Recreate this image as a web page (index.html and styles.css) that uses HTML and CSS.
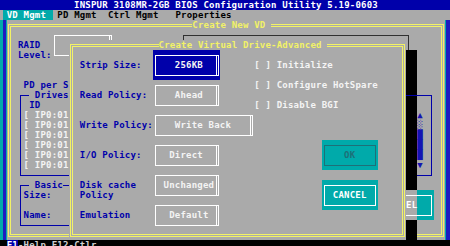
FILE: index.html
```html
<!DOCTYPE html>
<html lang="en">

<head>
    <meta charset="UTF-8">
    <title>Create Virtual Drive-Advanced</title>
    <link rel="stylesheet" href="styles.css">
</head>

<body>
    <div class="screen">
        <div class="titlebar">INSPUR 3108MR-2GB BIOS Configuration Utility 5.19-0603</div>

        <div class="menu-sel"></div>
        <div class="menu menu-vd">VD Mgmt</div>
        <div class="menu menu-pd">PD Mgmt</div>
        <div class="menu menu-ctrl">Ctrl Mgmt</div>
        <div class="menu menu-prop">Properties</div>

        <div class="edge edge-l"></div>
        <div class="edge edge-r"></div>

        <!-- Create New VD -->
        <div class="win win-new"></div>
        <div class="frame frame-new"></div>
        <div class="win-title title-new">Create New VD</div>

        <div class="t raid-lbl">RAID
Level:</div>
        <div class="box dd-raid"></div>
        <div class="thin-box"></div>
        <div class="t pd-span">PD per S</div>

        <div class="group drives-box"></div>
        <div class="t group-title drives-title"> Drives</div>
        <div class="t drives-id">ID</div>
        <div class="t drives-list">[ IP0:01
[ IP0:01
[ IP0:01
[ IP0:01
[ IP0:01
[ IP0:01</div>

        <div class="group basic-box"></div>
        <div class="t group-title basic-title"> Basic</div>
        <div class="t basic-lbl">Size:

Name:</div>

        <div class="pd-list"></div>
        <div class="t scrollbar">▲
░
█
█
█
▼</div>

        <div class="btn btn-back"><span class="btn-face"></span></div>

        <!-- shadow of the dialog -->
        <div class="shadow"></div>
        <div class="shadow-line"></div>
        <div class="shadow-btn"><span>EL</span></div>

        <!-- Create Virtual Drive-Advanced -->
        <div class="win win-adv"></div>
        <div class="frame frame-adv"></div>
        <div class="win-title title-adv">Create Virtual Drive-Advanced </div>

        <div class="t adv-labels">Strip Size:


Read Policy:


Write Policy:


I/O Policy:


Disk cache
Policy

Emulation</div>

        <div class="adv-fields">
            <div class="field field-sel"><span> 256KB</span></div>
            <div class="field"><span> Ahead</span></div>
            <div class="field field-wide"><span>Write Back</span></div>
            <div class="field"><span>Direct</span></div>
            <div class="field"><span> Unchanged</span></div>
            <div class="field"><span> Default</span></div>
        </div>

        <div class="t adv-checks">[ ] Initialize

[ ] Configure HotSpare

[ ] Disable BGI</div>

        <div class="btn btn-ok"><span class="btn-face">OK</span></div>
        <div class="btn btn-cancel"><span class="btn-face">CANCEL</span></div>

        <div class="status"><span class="key">F1</span>-Help F12-Ctlr</div>
    </div>
</body>

</html>
```

FILE: styles.css
```css
body {
    margin: 0;
    background: #000;
}

/* 80 x 25 text screen, 5.625 x 10 px cells */
.screen {
    width: 449px;
    height: 246px;
    padding-left: 1px;
    overflow: hidden;
    display: grid;
    grid-template-columns: repeat(80, 5.625px);
    grid-template-rows: repeat(25, 10px);
    background: linear-gradient(#0000aa 0 10px, #aaaaaa 10px 20px, #00aaaa 20px 240px, #000 240px);
    font: bold 9px/10px "DejaVu Sans Mono", monospace;
    letter-spacing: 0.207px;
    color: #0000aa;
}

.t {
    white-space: pre;
}

.titlebar {
    grid-column: 1 / -1;
    grid-row: 1;
    background: #0000aa;
    color: #fff;
    text-align: center;
    white-space: pre;
}

.menu {
    grid-row: 2;
    white-space: pre;
    color: #000;
}

.menu-sel {
    grid-row: 2;
    grid-column: 1 / 11;
    margin: 0 4px 0 2px;
    background: #00aaaa;
}

.menu-vd {
    grid-column: 2 / 10;
    color: #fff;
}

.menu-pd {
    grid-column: 11 / 18;
}

.menu-ctrl {
    grid-column: 20 / 29;
}

.menu-prop {
    grid-column: 32 / 42;
}

.edge {
    grid-row: 3 / 25;
}

.edge-l {
    grid-column: 1;
    background: linear-gradient(90deg, #00aaaa 0 2.3px, #1c1cc0 2.3px 4.7px, #00aaaa 4.7px);
}

.edge-r {
    grid-column: 80;
    background: linear-gradient(90deg, #00aaaa 0 0.8px, #1c1cc0 0.8px);
}

.win {
    background: #aaaaaa;
}

.frame {
    border: 3px double #f2f266;
    margin: 3.5px 1.3px;
}

.win-title {
    background: #aaaaaa;
    color: #f2f266;
    white-space: pre;
}

.win-new,
.frame-new {
    grid-column: 2 / 80;
    grid-row: 3 / 25;
}

.title-new {
    grid-column: 35 / 49;
    grid-row: 3;
}

.raid-lbl {
    grid-column: 4 / 10;
    grid-row: 5 / 7;
}

.box {
    border: 1px solid #fff;
    border-right: 3px double #fff;
    margin: 4.5px 1.3px 4.5px 2.3px;
}

.dd-raid {
    grid-column: 10 / 21;
    grid-row: 4 / 7;
}

.thin-box {
    grid-column: 33 / 74;
    grid-row: 4 / 8;
    margin: 4.5px 2.3px 0;
    border: 1px solid #303030;
    border-bottom: 0;
}

.pd-span {
    grid-column: 5 / 13;
    grid-row: 9;
}

.group {
    border: 1px solid #0000aa;
    margin: 4.5px 0 4.5px 2.3px;
}

.group-title {
    background: #aaaaaa;
}

.drives-box {
    grid-column: 4 / 31;
    grid-row: 10 / 19;
}

.drives-title {
    grid-column: 6 / 13;
    grid-row: 10;
}

.drives-id {
    grid-column: 6 / 8;
    grid-row: 11;
}

.drives-list {
    grid-column: 5 / 13;
    grid-row: 12 / 18;
    color: #f4f4f4;
}

.basic-box {
    grid-column: 4 / 31;
    grid-row: 19 / 24;
}

.basic-title {
    grid-column: 6 / 12;
    grid-row: 19;
}

.basic-lbl {
    grid-column: 5 / 11;
    grid-row: 20 / 23;
}

.pd-list {
    grid-column: 50 / 78;
    grid-row: 10 / 19;
    border: 1px solid #0000aa;
    margin: 4.5px 2.3px 4.5px 0;
}

.scrollbar {
    grid-column: 75;
    grid-row: 12 / 18;
    color: #1414b4;
}

.btn {
    background: #00aaaa;
    padding: 4.5px 2.3px;
}

.btn-face {
    display: block;
    height: 100%;
    box-sizing: border-box;
    border: 1px solid #fff;
    padding-top: 4.5px;
    text-align: center;
    white-space: pre;
}

.btn-back {
    grid-column: 67 / 78;
    grid-row: 20 / 23;
}

.shadow {
    grid-column: 73 / 75;
    grid-row: 6 / 25;
    background: #000;
}

.shadow-line {
    grid-column: 73 / 75;
    grid-row: 10;
    align-self: start;
    height: 1px;
    margin-top: 4.5px;
    background: #0000aa;
}

.shadow-btn {
    grid-column: 73 / 75;
    grid-row: 20 / 23;
    background: #aaaaaa;
    padding: 4.5px 0;
    color: #fff;
}

.shadow-btn span {
    display: block;
    height: 100%;
    box-sizing: border-box;
    border-top: 1px solid #fff;
    border-bottom: 1px solid #fff;
    padding-top: 4.5px;
}

.win-adv,
.frame-adv {
    grid-column: 13 / 73;
    grid-row: 5 / 25;
}

.title-adv {
    grid-column: 29 / 59;
    grid-row: 5;
}

.adv-labels {
    grid-column: 15 / 28;
    grid-row: 7 / 23;
}

.adv-fields {
    grid-column: 28 / 46;
    grid-row: 6 / 24;
    display: flex;
    flex-direction: column;
    align-items: flex-start;
    color: #f4f4f4;
}

.field {
    width: 67.5px;
    height: 30px;
    box-sizing: border-box;
    padding: 4.5px 1.3px 4.5px 2.3px;
}

.field-wide {
    width: 101.25px;
}

.field-sel {
    background: #0000aa;
}

.field span {
    display: block;
    height: 100%;
    box-sizing: border-box;
    border: 1px solid #fff;
    border-right: 3px double #fff;
    padding-top: 4.5px;
    text-align: center;
    white-space: pre;
}

.adv-checks {
    grid-column: 46 / 70;
    grid-row: 7 / 12;
    color: #f4f4f4;
}

.btn-ok {
    grid-column: 58 / 68;
    grid-row: 15 / 18;
    color: #1e7078;
}

.btn-ok .btn-face {
    border-color: #1e7078;
}

.btn-cancel {
    grid-column: 58 / 68;
    grid-row: 19 / 22;
    color: #fff;
}

.status {
    grid-column: 1 / -1;
    grid-row: 25;
    padding-left: 5.625px;
    background: #000;
    color: #d0d0d0;
    white-space: pre;
}

.key {
    background: #0000aa;
    color: #fff;
}
```
